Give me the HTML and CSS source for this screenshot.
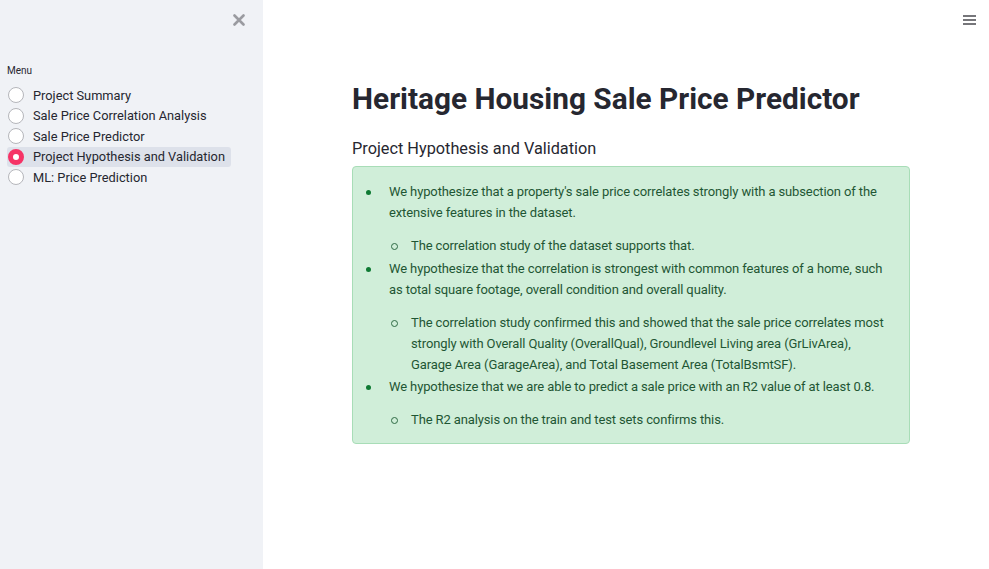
FILE: index.html
```html
<!DOCTYPE html>
<html lang="en">
<head>
<meta charset="utf-8">
<title>Heritage Housing</title>
<link rel="stylesheet" href="styles.css">
</head>
<body>
<div class="app">
  <aside class="sidebar">
    <div class="sidebar-top">
      <button class="close-btn" aria-label="Close sidebar">
        <svg width="12" height="12" viewBox="0 0 12 12"><path d="M1.5 1.5 L10.5 10.5 M10.5 1.5 L1.5 10.5" stroke="#9a9ba0" stroke-width="2.6" stroke-linecap="round"/></svg>
      </button>
    </div>
    <div class="menu-label">Menu</div>
    <ul class="radio-list">
      <li class="radio"><span class="dot"></span><span class="lbl">Project Summary</span></li>
      <li class="radio"><span class="dot"></span><span class="lbl">Sale Price Correlation Analysis</span></li>
      <li class="radio"><span class="dot"></span><span class="lbl">Sale Price Predictor</span></li>
      <li class="radio active"><span class="dot"></span><span class="lbl">Project Hypothesis and Validation</span></li>
      <li class="radio"><span class="dot"></span><span class="lbl">ML: Price Prediction</span></li>
    </ul>
  </aside>
  <main class="main">
    <header class="topbar">
      <button class="menu-btn" aria-label="Menu">
        <svg width="13" height="10" viewBox="0 0 13 10"><path d="M0 1 H13 M0 5 H13 M0 9 H13" stroke="#4a4a4f" stroke-width="1.6"/></svg>
      </button>
    </header>
    <section class="content">
      <h1 class="title">Heritage Housing Sale Price Predictor</h1>
      <h3 class="subtitle">Project Hypothesis and Validation</h3>
      <div class="alert">
        <ul class="lvl1">
          <li><p>We hypothesize that a property's sale price correlates strongly with a subsection of the extensive features in the dataset.</p>
            <ul class="lvl2"><li>The correlation study of the dataset supports that.</li></ul>
          </li>
          <li><p>We hypothesize that the correlation is strongest with common features of a home, such as total square footage, overall condition and overall quality.</p>
            <ul class="lvl2"><li>The correlation study confirmed this and showed that the sale price correlates most strongly with Overall Quality (OverallQual), Groundlevel Living area (GrLivArea), Garage Area (GarageArea), and Total Basement Area (TotalBsmtSF).</li></ul>
          </li>
          <li><p>We hypothesize that we are able to predict a sale price with an R2 value of at least 0.8.</p>
            <ul class="lvl2"><li>The R2 analysis on the train and test sets confirms this.</li></ul>
          </li>
        </ul>
      </div>
    </section>
  </main>
</div>
</body>
</html>
```

FILE: styles.css
```css
* { box-sizing: border-box; }
html, body { margin: 0; padding: 0; height: 100%; }
body {
  font-family: Roboto, "Noto Sans", sans-serif;
  color: #262730;
  background: #fff;
}
.app { display: flex; height: 569px; overflow: hidden; }
.sidebar {
  width: 263px;
  flex: none;
  background: #f0f2f6;
  padding: 0 7px;
}
.sidebar-top { display: flex; justify-content: flex-end; height: 64px; padding-top: 14px; padding-right: 11px; }
.close-btn { border: 0; background: none; padding: 0; width: 12px; height: 12px; display: flex; cursor: pointer; }
.menu-label { font-size: 10px; color: #262730; margin: 0 0 7px 0; line-height: 14px; }
.radio-list { list-style: none; margin: 0; padding: 0; }
.radio {
  display: flex; align-items: center; gap: 9px;
  height: 20.5px; width: fit-content;
  padding: 0 6px 0 1px; border-radius: 3px;
  font-size: 12.8px; color: #262730;
}
.radio.active { background: #dde1ea; }
.dot {
  width: 16px; height: 16px; border-radius: 50%;
  border: 1px solid #b5b6bb; background: #fff; flex: none;
}
.radio.active .dot {
  border: 5px solid #f63366; background: #fff;
}
.main { flex: 1; display: flex; flex-direction: column; }
.topbar { display: flex; justify-content: flex-end; height: 60px; padding: 15px 13px 0 0; }
.menu-btn { border: 0; background: none; padding: 0; height: 10px; display: flex; cursor: pointer; }
.content { width: 558px; margin-left: 89px; }
.title {
  margin: 21px 0 0 0; font-size: 29.8px; font-weight: 700; line-height: 36px;
}
.subtitle { margin: 20px 0 0 0; font-size: 16.3px; font-weight: 400; line-height: 24px; }
.alert {
  margin-top: 5px;
  background: #d0eed9;
  border: 1px solid #a8ddb7;
  border-radius: 4px;
  padding: 14px 16px 11px 16px;
  color: #1f5634;
  font-size: 13px;
  letter-spacing: -0.12px;
  line-height: 21px;
}
.alert ul { margin: 0; list-style: none; }
.lvl1 { padding-left: 20px; }
.lvl1 > li::before {
  content: ""; display: inline-block; width: 5px; height: 5px; border-radius: 50%;
  background: #0e7a33; margin-left: -23px; margin-right: 18px; vertical-align: middle;
}
.lvl1 > li > p { display: inline; margin: 0; }
.lvl2 { padding-left: 22px; margin-top: 12px !important; margin-bottom: 1.5px !important; }
.lvl2 > li::before {
  content: ""; display: inline-block; width: 5px; height: 5px; border-radius: 50%;
  border: 1px solid #2e6a44; margin-left: -20px; margin-right: 13px; vertical-align: middle;
}
```
